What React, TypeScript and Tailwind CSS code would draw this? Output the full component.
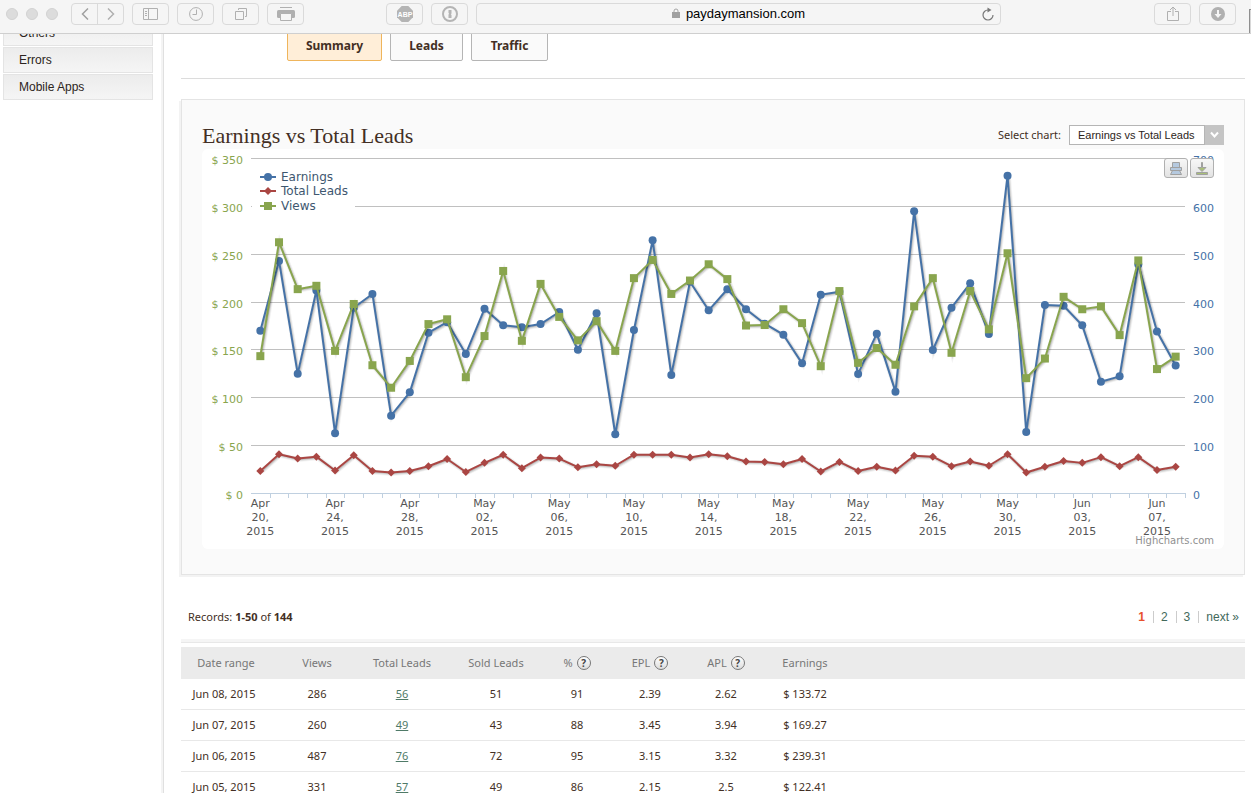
import type { ReactNode } from "react";

const EARNINGS = [
  170, 243, 125, 212, 63, 194, 208.5, 81.3, 105.7, 168, 179, 145.8, 193, 175.7, 173.6, 177, 189.6, 150.2, 188.3, 61.9,
  170.8, 264.5, 123.8, 221.3, 191.4, 213.4, 192.5, 177.4, 165.9, 136, 207.7, 210.8, 124.9, 167, 106.4, 294.8, 149.9,
  194.1, 219.6, 166.6, 332, 64.3, 197, 196.2, 175.7, 116.8, 122.41, 239.31, 169.27, 133.72,
];

const LEADS = [
  47, 82, 73, 77, 48, 80, 47, 44, 47, 57, 72, 45, 64, 81, 53, 75, 73, 55, 61, 58, 81, 81, 81, 75, 82, 78, 67, 66, 61,
  72, 46, 66, 47, 56, 48, 79, 77, 57, 67, 58, 82, 44, 56, 68, 64, 76, 57, 76, 49, 56,
];

const VIEWS = [
  287, 525, 427, 434, 298, 396, 268, 221, 277, 354, 364, 243, 329, 465, 319, 438, 369, 320, 360, 298, 450, 488, 417,
  445, 479, 448, 351, 352, 385, 356, 266, 423, 273, 304, 269, 391, 450, 294, 423, 343, 502, 241, 282, 411, 385, 391,
  331, 487, 260, 286,
];

const X_LABELS = [
  "Apr 20,", "Apr 24,", "Apr 28,", "May 02,", "May 06,", "May 10,", "May 14,",
  "May 18,", "May 22,", "May 26,", "May 30,", "Jun 03,", "Jun 07,",
];

const ROWS = [
  { date: "Jun 08, 2015", views: 286, total: 56, sold: 51, pct: 91, epl: "2.39", apl: "2.62", earnings: "$ 133.72" },
  { date: "Jun 07, 2015", views: 260, total: 49, sold: 43, pct: 88, epl: "3.45", apl: "3.94", earnings: "$ 169.27" },
  { date: "Jun 06, 2015", views: 487, total: 76, sold: 72, pct: 95, epl: "3.15", apl: "3.32", earnings: "$ 239.31" },
  { date: "Jun 05, 2015", views: 331, total: 57, sold: 49, pct: 86, epl: "2.15", apl: "2.5", earnings: "$ 122.41" },
];

const LEFT = 49;
const RIGHT = 983;
const BOTTOM = 344.5;
const STEP = (RIGHT - LEFT) / 50;
const GRID = [344.5, 296.5, 248.5, 200.5, 153.5, 105.5, 57.5, 9.5];

const px = (i: number) => LEFT + (i + 0.5) * STEP;
const py = (value: number, max: number) => BOTTOM - (value / max) * 335;

type Shape = "circle" | "diamond" | "square";

function Marker({ shape, x, y, color }: { shape: Shape; x: number; y: number; color: string }) {
  if (shape === "circle") return <circle cx={x} cy={y} r={4} fill={color} />;
  if (shape === "square") return <rect x={x - 4} y={y - 4} width={8} height={8} fill={color} />;
  return <path d={`M${x} ${y - 4}l4 4l-4 4l-4 -4z`} fill={color} />;
}

function Series({ data, max, color, shape }: { data: number[]; max: number; color: string; shape: Shape }) {
  const points = data.map((v, i) => `${px(i)},${py(v, max)}`).join(" ");
  return (
    <g>
      {/* soft shadow below the line */}
      <g transform="translate(1 1)" fill="none" stroke="#000">
        <polyline points={points} strokeWidth={5} opacity={0.05} />
        <polyline points={points} strokeWidth={3} opacity={0.1} />
        <polyline points={points} strokeWidth={1} opacity={0.15} />
      </g>
      <polyline points={points} fill="none" stroke={color} strokeWidth={2} strokeLinejoin="round" />
      {data.map((v, i) => (
        <Marker key={i} shape={shape} x={px(i)} y={py(v, max)} color={color} />
      ))}
    </g>
  );
}

const LEGEND: { name: string; color: string; shape: Shape; y: number }[] = [
  { name: "Earnings", color: "#4572A7", shape: "circle", y: 28 },
  { name: "Total Leads", color: "#AA4643", shape: "diamond", y: 42 },
  { name: "Views", color: "#89A54E", shape: "square", y: 57 },
];

function Chart() {
  return (
    <div className="relative rounded-md bg-white">
      <svg viewBox="0 0 1022 400" className="block w-full font-['DejaVu_Sans'] text-[11px]">
        {GRID.map((y, i) => {
          const labelY = Math.floor(BOTTOM - i * 47.86 + 6);
          return (
            <g key={y}>
              <path d={`M${LEFT} ${y}H${RIGHT}`} stroke={i === 0 ? "#C0D0E0" : "#C0C0C0"} />
              <text x={41} y={labelY} textAnchor="end" fill="#89A54E">{`$ ${i * 50}`}</text>
              <text x={991} y={labelY} fill="#4572A7">{i * 100}</text>
            </g>
          );
        })}
        {Array.from({ length: 50 }, (_, i) => (
          <path key={i} d={`M${Math.round(LEFT + (i + 1) * STEP) + 0.5} 344v5`} stroke="#C0D0E0" />
        ))}
        {X_LABELS.map((label, i) => {
          const x = px(i * 4);
          const [month, day] = label.split(" ");
          return (
            <text key={label} textAnchor="middle" fill="#555">
              <tspan x={x} y={358}>{month}</tspan>
              <tspan x={x} y={372}>{day}</tspan>
              <tspan x={x} y={386}>2015</tspan>
            </text>
          );
        })}
        <Series data={EARNINGS} max={350} color="#4572A7" shape="circle" />
        <Series data={LEADS} max={700} color="#AA4643" shape="diamond" />
        <Series data={VIEWS} max={700} color="#89A54E" shape="square" />
        <rect x={50} y={17} width={103} height={49} fill="#fff" />
        {LEGEND.map((item) => (
          <g key={item.name}>
            <path d={`M58 ${item.y}h16`} stroke={item.color} strokeWidth={2} />
            <Marker shape={item.shape} x={66} y={item.y} color={item.color} />
            <text x={79} y={item.y + 4} fill="#3E576F" className="text-[12px]">{item.name}</text>
          </g>
        ))}
      </svg>
      <div className="absolute top-[9px] right-[10px] flex gap-0.5">
        <ExportButton label="Print the chart">
          <path d="M8.500 4.500h7v5h-7zM6.500 9.500h11v3h-11zM8.500 12.500h7l2 4h-11z" fill="#B5C9DF" />
        </ExportButton>
        <ExportButton label="Export chart">
          <path d="M11.500 4.500h1v5h3.500l-4 4l-4 -4h3.500zM6.500 14.500h11v2h-11z" fill="#A8BF77" />
        </ExportButton>
      </div>
      <a href="#" className="absolute right-[10px] bottom-0.5 font-['DejaVu_Sans'] text-[10px] leading-3 text-[#909090]">
        Highcharts.com
      </a>
    </div>
  );
}

function ExportButton({ label, children }: { label: string; children: ReactNode }) {
  return (
    <button aria-label={label} className="h-5 w-6 rounded-[3px] border border-[#b0b0b0] bg-linear-to-b from-[#f7f7f7] to-[#e3e3e3]">
      <svg viewBox="1 1 22 18" className="block h-[18px] w-[22px]" stroke="#A0A0A0">{children}</svg>
    </button>
  );
}

function ToolButton({ label, className = "", children }: { label: string; className?: string; children: ReactNode }) {
  return (
    <button
      aria-label={label}
      className={`flex h-[22px] w-[37px] shrink-0 items-center justify-center rounded-[4px] border border-[#dadada] ${className}`}
    >
      {children}
    </button>
  );
}

function Toolbar() {
  return (
    <header className="relative z-10 flex h-[34px] shrink-0 items-start gap-2 border-b border-[#cfcfcf] bg-[#f5f5f5] pt-[3px] pr-[15px] pl-1.5 text-[#b0b0b0]">
      <div className="mr-[5px] flex h-[22px] items-center gap-2">
        {["Close", "Minimize", "Zoom"].map((name) => (
          <button key={name} aria-label={name} className="size-3 rounded-full border border-[#d2d2d2] bg-[#dcdcdc]" />
        ))}
      </div>
      <div className="flex h-[22px] w-[53px] shrink-0 rounded-[4px] border border-[#dadada]">
        <button aria-label="Back" className="flex flex-1 items-center justify-center border-r border-[#dadada]">
          <svg width="8" height="12" fill="none" stroke="#a0a0a0" strokeWidth="1.5"><path d="M7 .5L1.500 6L7 11.500" /></svg>
        </button>
        <button aria-label="Forward" className="flex flex-1 items-center justify-center">
          <svg width="8" height="12" fill="none" stroke="#b0b0b0" strokeWidth="1.5"><path d="M1 .5L6.500 6L1 11.500" /></svg>
        </button>
      </div>
      <ToolButton label="Sidebar">
        <svg width="15" height="12" fill="none" stroke="currentColor">
          <path d="M.5 .5h14v11h-14zM5.500 .5v11M2 3.500h2M2 5.500h2M2 7.500h2" />
        </svg>
      </ToolButton>
      <ToolButton label="History">
        <svg width="14" height="14" fill="none" stroke="currentColor">
          <circle cx="7" cy="7" r="6.4" />
          <path d="M7.500 2.500v5h-4" />
        </svg>
      </ToolButton>
      <ToolButton label="Tabs">
        <svg width="12" height="12" fill="none" stroke="currentColor">
          <path d="M.5 3.500h8v8h-8zM3.500 2v-1.500h8v8h-1.500" />
        </svg>
      </ToolButton>
      <ToolButton label="Print">
        <svg width="18" height="14" fill="none">
          <path d="M3 .5h12" stroke="currentColor" />
          <rect y="3" width="18" height="8" rx="1.5" fill="currentColor" />
          <path d="M3.500 6.500h11v7h-11z" fill="#f5f5f5" stroke="currentColor" />
        </svg>
      </ToolButton>
      <ToolButton label="AdBlock Plus" className="ml-[74px]">
        <svg width="16" height="16">
          <path d="M4.700 0h6.600L16 4.700v6.600L11.300 16H4.700L0 11.300V4.700z" fill="#b4b4b4" />
          <text x="8" y="10.500" textAnchor="middle" fill="#fff" className="font-['Liberation_Sans'] text-[7px] font-bold">ABP</text>
        </svg>
      </ToolButton>
      <ToolButton label="1Password">
        <svg width="16" height="16">
          <circle cx="8" cy="8" r="7" fill="none" stroke="#b4b4b4" strokeWidth="2" />
          <path d="M6.500 4h3v3.500l-.7 .8l.7 .7v3h-3v-3.500l.7 -.8l-.7 -.7z" fill="#b4b4b4" />
        </svg>
      </ToolButton>
      <div className="relative mr-[145px] flex h-[22px] flex-1 items-center justify-center gap-1.5 rounded-[4px] border border-[#dadada]">
        <svg width="8" height="12">
          <path d="M2 5V3a2 2 0 0 1 4 0v2" fill="none" stroke="#a5a5a5" />
          <rect y="4" width="8" height="6" fill="#a0a0a0" />
        </svg>
        <span className="font-['Liberation_Sans'] text-[13px] text-black">paydaymansion.com</span>
        <button aria-label="Reload" className="absolute right-1.5">
          <svg width="12" height="14" className="block" fill="none" stroke="#777" strokeWidth="1.2">
            <path d="M6 3A5 5 0 1 0 11 8" />
            <path d="M5.500 .5L9.500 3L5.500 5.500z" fill="#777" stroke="none" />
          </svg>
        </button>
      </div>
      <ToolButton label="Share">
        <svg width="12" height="16" fill="none" stroke="currentColor">
          <path d="M4 5.500h-3.500v9h11v-9h-3.500M6 10v-9M3 4l3 -3l3 3" />
        </svg>
      </ToolButton>
      <ToolButton label="Downloads">
        <svg width="14" height="14">
          <circle cx="7" cy="7" r="7" fill="#b0b0b0" />
          <path d="M6 3h2v4h2.500l-3.500 4l-3.500 -4h2.500z" fill="#f5f5f5" />
        </svg>
      </ToolButton>
      <div className="absolute right-0 bottom-0 h-6 w-0.5 border-t border-l border-[#8f8f8f] bg-[#d8d8d8]" />
    </header>
  );
}

function HelpIcon() {
  return (
    <span className="ml-1 inline-flex size-3.5 items-center justify-center rounded-full border border-[#777] bg-linear-to-b from-white to-[#ddd] text-[10px] leading-none font-bold text-[#444]">
      ?
    </span>
  );
}

const TABS = [
  { name: "Summary", style: "w-[95px] border-[#efb55c] bg-[#ffeed8]" },
  { name: "Leads", style: "w-[73px] border-[#b5b5b5] bg-[#fafafa]" },
  { name: "Traffic", style: "w-[77px] border-[#b5b5b5] bg-[#fafafa]" },
];

export default function App() {
  return (
    <div className="flex h-screen flex-col overflow-hidden bg-white font-['Noto_Sans',sans-serif] text-[11px] text-[#432f24]">
      <Toolbar />
      <div className="flex min-h-0 flex-1 overflow-hidden">
        <nav className="w-[164px] shrink-0 border-r border-[#e0e0e0] pl-[3px] shadow-[inset_-2px_0_0_#f4f4f4]">
          <div className="-mt-3.5 flex w-[150px] flex-col gap-px font-['Liberation_Sans'] text-[12px] text-[#2c2420]">
            {["Others", "Errors", "Mobile Apps"].map((item) => (
              <a key={item} href="#" className="flex h-[26px] items-center border border-[#e4e4e4] bg-linear-to-b from-[#ececec] to-[#f5f5f5] px-[15px]">
                {item}
              </a>
            ))}
          </div>
        </nav>

        <main className="min-w-0 flex-1 pr-1.5 pl-[17px]">
          <div className="-mt-1 ml-[106px] flex gap-2">
            {TABS.map((tab) => (
              <button key={tab.name} className={`h-[31px] rounded-[2px] border text-[12px] font-bold ${tab.style}`}>
                {tab.name}
              </button>
            ))}
          </div>
          <hr className="mt-[17px] border-[#dcdcdc]" />

          <section className="mt-5 border border-[#e4e4e4] bg-[#fafafa] px-5 pb-[25px] shadow-[-2px_2px_0_#f3f3f3]">
            <div className="flex h-[49px] items-end justify-between">
              <h2 className="font-['Liberation_Serif'] text-[22px] leading-[26px] text-[#432f24]">Earnings vs Total Leads</h2>
              <div className="flex items-center gap-2 pb-1">
                <label htmlFor="chart">Select chart:</label>
                <div className="relative">
                  <select
                    id="chart"
                    className="block h-5 w-[155px] appearance-none border border-[#b5b5b5] bg-white pl-2 font-['Liberation_Sans'] text-[11px] text-[#2c2420]"
                  >
                    <option>Earnings vs Total Leads</option>
                  </select>
                  <span className="pointer-events-none absolute top-0 right-0 flex h-5 w-5 items-center justify-center border-l border-[#b5b5b5] bg-[#c4c4c4]">
                    <svg width="9" height="8" fill="none" stroke="#fff" strokeWidth="2"><path d="M1 1.500l3.500 4l3.500 -4" /></svg>
                  </span>
                </div>
              </div>
            </div>
            <Chart />
          </section>

          <div className="flex h-16 items-center justify-between pt-5 pr-1.5 pl-[7px]">
            <p>
              Records: <b>1-50</b> of <b>144</b>
            </p>
            <div className="flex items-center gap-2 font-['Liberation_Sans'] text-[12px] text-[#42695a]">
              <b className="text-[#e8502c]">1</b>
              <a href="#" className="border-l border-[#ccc] pl-[7px] leading-3">2</a>
              <a href="#" className="border-l border-[#ccc] pl-[7px] leading-3">3</a>
              <a href="#" className="border-l border-[#ccc] pl-[7px] leading-3">next »</a>
            </div>
          </div>
          <div className="mb-1 h-1 border-b border-[#e8e8e8] bg-[#f5f5f5]" />

          <table className="w-full table-fixed border-separate border-spacing-0 text-center">
            <thead>
              <tr className="h-8 bg-[#ebebeb] text-[#777] [&>th]:font-normal">
                <th className="w-[92px] pr-0.5">Date range</th>
                <th className="w-[88px]">Views</th>
                <th className="w-[82px]">Total Leads</th>
                <th className="w-[106px]">Sold Leads</th>
                <th className="w-[56px]">%<HelpIcon /></th>
                <th className="w-[90px]">EPL<HelpIcon /></th>
                <th className="w-[62px]">APL<HelpIcon /></th>
                <th className="w-[96px]">Earnings</th>
                <th />
              </tr>
            </thead>
            <tbody>
              {ROWS.map((row) => (
                <tr key={row.date} className="h-[31px] [&>td]:border-b [&>td]:border-[#e8e8e8]">
                  <td className="pr-1.5">{row.date}</td>
                  <td>{row.views}</td>
                  <td>
                    <a href="#" className="text-[#4f7a68] underline underline-offset-1">{row.total}</a>
                  </td>
                  <td>{row.sold}</td>
                  <td>{row.pct}</td>
                  <td>{row.epl}</td>
                  <td>{row.apl}</td>
                  <td>{row.earnings}</td>
                  <td />
                </tr>
              ))}
            </tbody>
          </table>
        </main>
      </div>
    </div>
  );
}
